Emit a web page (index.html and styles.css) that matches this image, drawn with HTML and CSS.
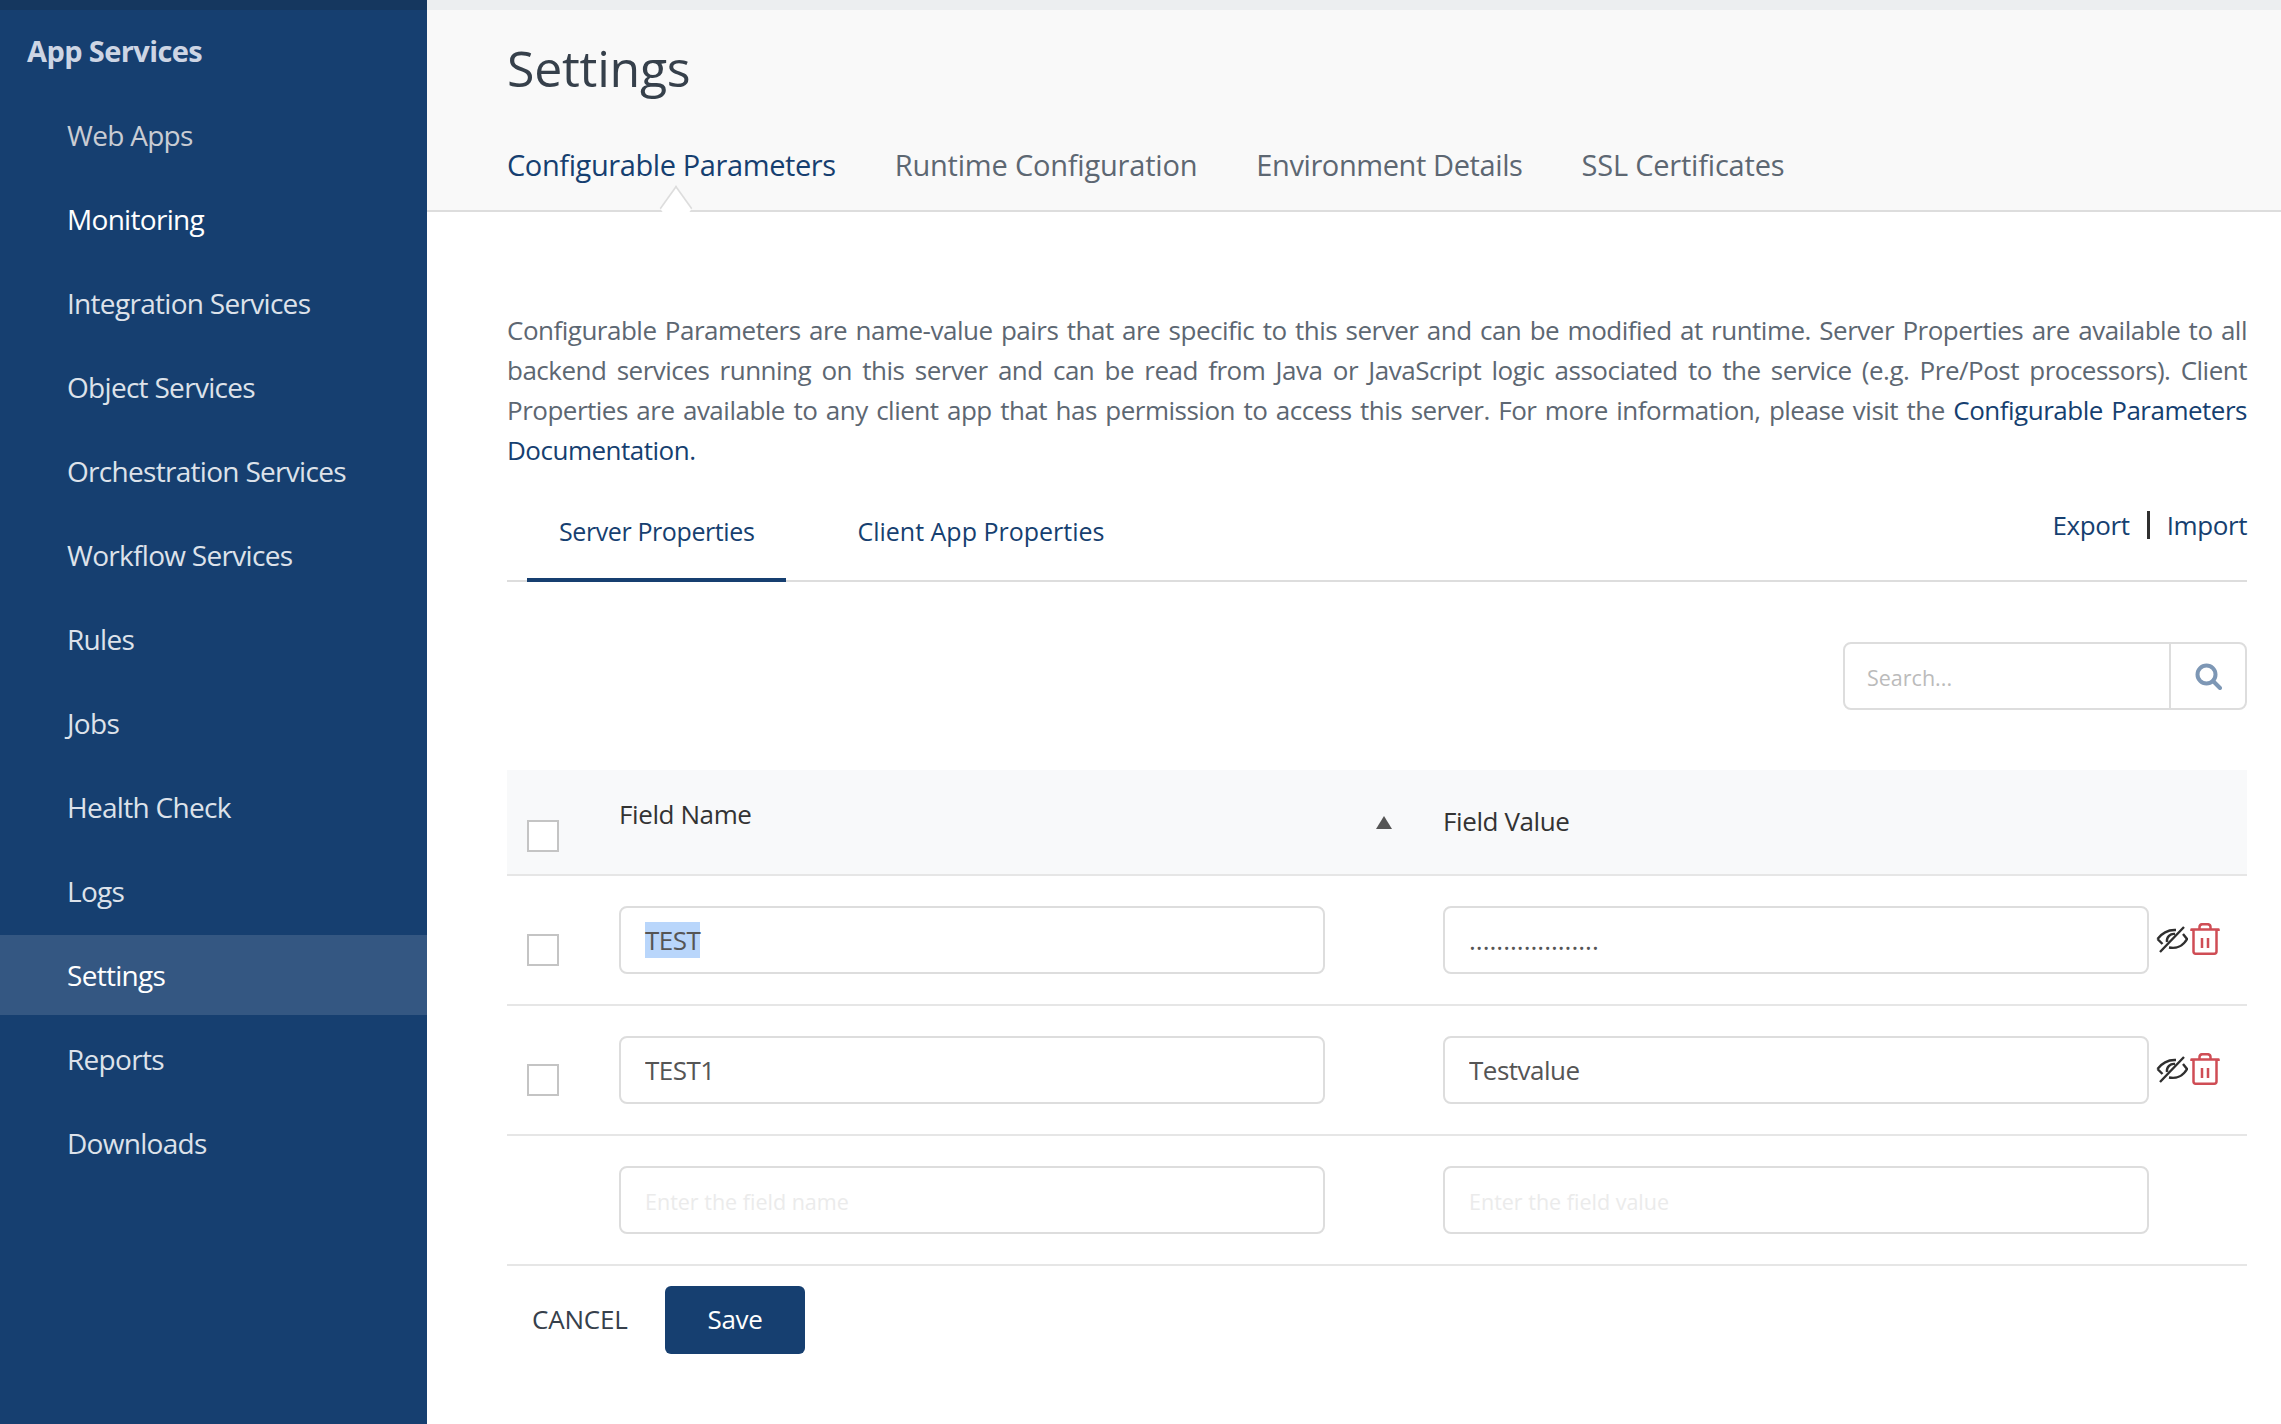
FILE: index.html
```html
<!DOCTYPE html>
<html lang="en">
<head>
    <meta charset="UTF-8">
    <meta name="viewport" content="width=device-width, initial-scale=1.0">
    <title>Settings</title>
    <link rel="stylesheet" href="styles.css">
</head>
<body>
    <nav class="sidebar">
        <div class="sidebar-title">App Services</div>
        <a class="nav-item muted">Web Apps</a>
        <a class="nav-item bright">Monitoring</a>
        <a class="nav-item">Integration Services</a>
        <a class="nav-item">Object Services</a>
        <a class="nav-item">Orchestration Services</a>
        <a class="nav-item">Workflow Services</a>
        <a class="nav-item">Rules</a>
        <a class="nav-item">Jobs</a>
        <a class="nav-item">Health Check</a>
        <a class="nav-item">Logs</a>
        <a class="nav-item bright active">Settings</a>
        <a class="nav-item">Reports</a>
        <a class="nav-item">Downloads</a>
    </nav>

    <main class="main">
        <header class="page-header">
            <h1>Settings</h1>
            <div class="top-tabs">
                <a class="top-tab selected">Configurable Parameters</a>
                <a class="top-tab wide">Runtime Configuration</a>
                <a class="top-tab">Environment Details</a>
                <a class="top-tab wide">SSL Certificates</a>
            </div>
        </header>

        <section class="content">
            <p class="intro">Configurable Parameters are name-value pairs that are specific to this server and can be modified at runtime. Server Properties are available to all backend services running on this server and can be read from Java or JavaScript logic associated to the service (e.g. Pre/Post processors). Client Properties are available to any client app that has permission to access this server. For more information, please visit the <a class="link">Configurable Parameters Documentation.</a></p>

            <div class="sub-tabs">
                <a class="sub-tab selected">Server Properties</a>
                <a class="sub-tab">Client App Properties</a>
                <div class="transfer">
                    <a class="link">Export</a>
                    <span class="divider"></span>
                    <a class="link">Import</a>
                </div>
            </div>

            <div class="search-row">
                <div class="search">
                    <input class="search-input" type="text" placeholder="Search...">
                    <span class="search-btn">
                        <svg width="27" height="27" viewBox="0 0 27 27" fill="none" stroke="#7d97b5" stroke-width="4">
                            <circle cx="11.5" cy="11.5" r="9"/>
                            <path d="M18 18l7 7" stroke-linecap="round"/>
                        </svg>
                    </span>
                </div>
            </div>

            <div class="table">
                <div class="row head">
                    <span class="checkbox head-check"></span>
                    <div class="head-name">Field Name<span class="sort"></span></div>
                    <div class="head-value">Field Value</div>
                </div>
                <div class="row">
                    <span class="checkbox"></span>
                    <div class="field"><span class="selected-text">TEST</span></div>
                    <input class="field value dots" type="text" value="...................">
                    <div class="actions">
                        <svg width="32" height="27" viewBox="0 0 32 27" fill="none" stroke="#2f2f2f" stroke-width="2.4">
                            <path d="M1.500 13C6 7 12 3.500 20 4M1.500 13l5 5M27 8l4 5c-4 7-11 10-18 8.500"/>
                            <path d="M11 16a7 7 0 0 1 8-8M4 26L28 1"/>
                        </svg>
                        <svg width="30" height="32" viewBox="0 0 30 32" fill="none" stroke="#cf4d55" stroke-width="2.500" stroke-linejoin="round">
                            <path d="M1.500 8V6.500h27V8M9.500 6V4q0-2.800 3-2.800h5q3 0 3 2.800v2M3.500 7v21.500q0 2.200 2.200 2.200h18.600q2.200 0 2.200-2.200V7"/>
                            <path d="M12 15v10M18 15v10"/>
                        </svg>
                    </div>
                </div>
                <div class="row">
                    <span class="checkbox"></span>
                    <input class="field" type="text" value="TEST1">
                    <input class="field value" type="text" value="Testvalue">
                    <div class="actions">
                        <svg width="32" height="27" viewBox="0 0 32 27" fill="none" stroke="#2f2f2f" stroke-width="2.4">
                            <path d="M1.500 13C6 7 12 3.500 20 4M1.500 13l5 5M27 8l4 5c-4 7-11 10-18 8.500"/>
                            <path d="M11 16a7 7 0 0 1 8-8M4 26L28 1"/>
                        </svg>
                        <svg width="30" height="32" viewBox="0 0 30 32" fill="none" stroke="#cf4d55" stroke-width="2.500" stroke-linejoin="round">
                            <path d="M1.500 8V6.500h27V8M9.500 6V4q0-2.800 3-2.800h5q3 0 3 2.800v2M3.500 7v21.500q0 2.200 2.200 2.200h18.600q2.200 0 2.200-2.200V7"/>
                            <path d="M12 15v10M18 15v10"/>
                        </svg>
                    </div>
                </div>
                <div class="row">
                    <span></span>
                    <input class="field empty" type="text" placeholder="Enter the field name">
                    <input class="field value empty" type="text" placeholder="Enter the field value">
                </div>
            </div>

            <div class="form-buttons">
                <button class="cancel-btn">CANCEL</button>
                <button class="save-btn">Save</button>
            </div>
        </section>
    </main>
</body>
</html>
```

FILE: styles.css
```css
* {
    box-sizing: border-box;
}
html, body {
    margin: 0;
    height: 100%;
    overflow: hidden;
}
body {
    display: flex;
    font-family: "Open Sans", "Noto Sans", sans-serif;
    font-size: 26px;
    color: #333;
    background: #fff;
}
a {
    cursor: pointer;
}

/* sidebar */
.sidebar {
    width: 427px;
    flex: none;
    background: #163f70;
    border-top: 10px solid #15375f;
    color: #dde2ea;
}
.sidebar-title {
    height: 85px;
    padding: 8px 0 0 27px;
    line-height: 66px;
    font-weight: 700;
    font-size: 29px;
    letter-spacing: -0.6px;
    color: #cdd5e4;
}
.nav-item {
    display: block;
    height: 80px;
    margin-bottom: 4px;
    padding-left: 67px;
    line-height: 80px;
    font-size: 28px;
    letter-spacing: -0.7px;
}
.nav-item.muted {
    color: #c9ccd3;
}
.nav-item.bright {
    color: #fff;
}
.nav-item.active {
    background: #345782;
}

/* header */
.main {
    flex: 1;
    min-width: 0;
}
.page-header {
    height: 212px;
    padding: 8px 0 0 80px;
    background: #f9f9f9;
    border-top: 10px solid #eceef0;
    border-bottom: 2px solid #ddd;
}
h1 {
    margin: 0 0 2px;
    font-size: 50px;
    font-weight: 400;
    line-height: 100px;
    letter-spacing: -0.25px;
    color: #36404b;
}
.top-tabs {
    display: flex;
    gap: 59px;
}
.top-tab {
    position: relative;
    line-height: 90px;
    font-size: 29px;
    letter-spacing: -0.4px;
    color: #5d6772;
}
.top-tab.wide {
    letter-spacing: -0.2px;
}
.top-tab.selected {
    color: #163f70;
}
/* little notch under the selected tab */
.top-tab.selected::after {
    content: "";
    position: absolute;
    left: 153px;
    top: 72px;
    width: 30px;
    height: 30px;
    background: #fff;
    border: 2px solid #ddd;
    border-right: none;
    border-bottom: none;
    transform: scale(0.72, 1) rotate(45deg);
}

/* content */
.content {
    padding: 98px 34px 0 80px;
}
.intro {
    margin: 0;
    line-height: 40px;
    text-align: justify;
    letter-spacing: -0.5px;
    color: #5d6772;
}
.link {
    color: #163f70;
}
.sub-tabs {
    display: flex;
    align-items: flex-end;
    height: 112px;
    padding-left: 20px;
    border-bottom: 2px solid #ddd;
}
.sub-tab {
    height: 80px;
    padding: 0 32px;
    margin-right: 39px;
    margin-bottom: -2px;
    line-height: 58px;
    font-size: 25px;
    color: #163f70;
}
.sub-tab.selected {
    border-bottom: 4px solid #163f70;
    letter-spacing: -0.4px;
}
.transfer {
    display: flex;
    align-items: center;
    gap: 17px;
    margin-left: auto;
    height: 80px;
    padding-bottom: 30px;
    letter-spacing: -0.4px;
}
.divider {
    width: 3px;
    height: 28px;
    background: #2f2f2f;
}

/* search */
.search-row {
    display: flex;
    justify-content: flex-end;
    padding-top: 60px;
}
.search {
    display: flex;
    width: 404px;
    height: 68px;
    border: 2px solid #ddd;
    border-radius: 8px;
}
.search-input {
    flex: 1;
    min-width: 0;
    padding: 2px 22px 0;
    border: none;
    border-right: 2px solid #ddd;
    background: transparent;
    font: inherit;
    font-size: 21.5px;
}
.search-input::placeholder {
    color: #bbb;
}
.search-btn {
    display: flex;
    align-items: center;
    justify-content: center;
    width: 74px;
}

/* table */
.table {
    margin-top: 60px;
}
.row {
    display: grid;
    grid-template-columns: 92px 706px 824px auto;
    align-items: center;
    height: 130px;
    padding-left: 20px;
    border-bottom: 2px solid #e6e6e6;
}
.row.head {
    height: 106px;
    background: #f8f9fa;
}
.head-name {
    position: relative;
    margin-top: -16px;
    letter-spacing: -0.4px;
}
.head-value {
    margin: -3px 0 0 118px;
    letter-spacing: -0.4px;
}
.sort {
    position: absolute;
    right: -67px;
    top: 20px;
    border-left: 8px solid transparent;
    border-right: 8px solid transparent;
    border-bottom: 13px solid #555;
}
.checkbox {
    width: 32px;
    height: 32px;
    margin-top: 20px;
    background: #fff;
    border: 2px solid #c4c4c4;
}
.head-check {
    margin-top: 28px;
}
.field {
    display: block;
    width: 706px;
    height: 68px;
    padding: 0 24px;
    border: 2px solid #ddd;
    border-radius: 8px;
    background: #fff;
    font: inherit;
    line-height: 64px;
    letter-spacing: -0.5px;
    color: #555;
    outline: none;
}
.field.value {
    margin-left: 118px;
}
.field.empty {
    padding-top: 2px;
    font-size: 21.5px;
    letter-spacing: 0;
}
.field.dots {
    letter-spacing: 0;
}
.field::placeholder {
    color: #ebebeb;
}
.selected-text {
    background: #b9d6fb;
}
.actions {
    display: flex;
    align-items: center;
    gap: 2px;
    margin-left: 7px;
    margin-top: -2px;
}

/* buttons */
.form-buttons {
    display: flex;
    align-items: center;
    padding-top: 20px;
}
.cancel-btn {
    width: 158px;
    height: 68px;
    padding: 0 0 3px 25px;
    border: none;
    background: transparent;
    font: inherit;
    letter-spacing: -0.2px;
    text-align: left;
    color: #36404b;
}
.save-btn {
    width: 140px;
    height: 68px;
    padding: 0 0 3px;
    border: none;
    border-radius: 6px;
    background: #163f70;
    color: #fff;
    font: inherit;
    letter-spacing: -0.3px;
}
```
